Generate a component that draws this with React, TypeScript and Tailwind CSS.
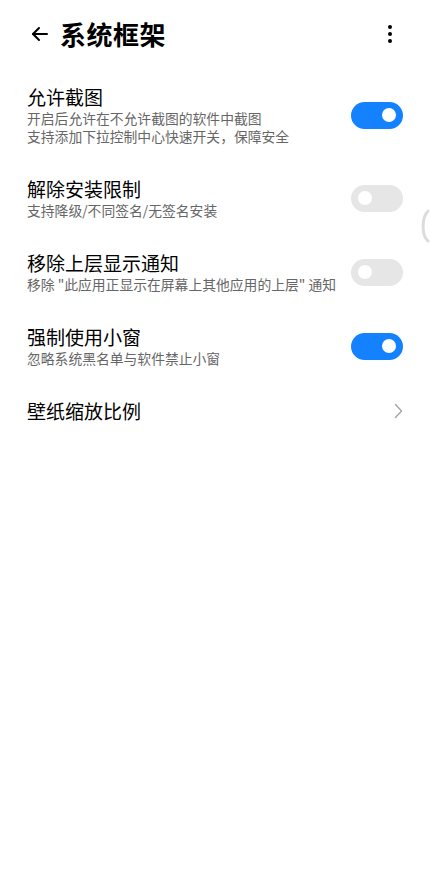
interface SettingRow {
  title: string;
  desc?: string;
  checked?: boolean;
  arrow?: boolean;
}

const rows: SettingRow[] = [
  {
    title: '允许截图',
    desc: '开启后允许在不允许截图的软件中截图\n支持添加下拉控制中心快速开关，保障安全',
    checked: true,
  },
  { title: '解除安装限制', desc: '支持降级/不同签名/无签名安装', checked: false },
  { title: '移除上层显示通知', desc: '移除 "此应用正显示在屏幕上其他应用的上层" 通知', checked: false },
  { title: '强制使用小窗', desc: '忽略系统黑名单与软件禁止小窗', checked: true },
  { title: '壁纸缩放比例', arrow: true },
];

function Toggle({ on }: { on: boolean }) {
  return (
    <div
      className={`flex h-[27px] w-[52px] shrink-0 items-center rounded-full px-[7px] ${
        on ? 'justify-end bg-[#1482ff]' : 'justify-start bg-[#e6e6e6]'
      }`}
    >
      <div className="h-[14px] w-[14px] rounded-full bg-white" />
    </div>
  );
}

export default function App() {
  return (
    <div
      className="relative min-h-[876px] w-full bg-white text-black"
      style={{ fontFamily: '"Noto Sans CJK SC", "Noto Sans", sans-serif' }}
    >
      {/* header */}
      <div className="flex h-[69px] items-center pl-[30px] pr-[38px] pb-[1px]">
        <svg width="20" height="20" viewBox="0 0 20 20" fill="none" stroke="#000" strokeWidth="2" strokeLinecap="round" strokeLinejoin="round">
          <path d="M17 10H3" />
          <path d="M9 4L3 10L9 16" />
        </svg>
        <h1 className="ml-[10px] text-[26px] leading-none font-bold tracking-[0.5px]">系统框架</h1>
        <div className="ml-auto flex flex-col items-center gap-[3px]">
          <span className="h-[4px] w-[4px] rounded-full bg-black" />
          <span className="h-[4px] w-[4px] rounded-full bg-black" />
          <span className="h-[4px] w-[4px] rounded-full bg-black" />
        </div>
      </div>

      {rows.map((row) => (
        <div key={row.title} className="flex items-center py-[16px] pl-[27px] pr-[27px]">
          <div className="flex-1">
            <div className="text-[19px] leading-[24px]">{row.title}</div>
            {row.desc && (
              <div className="whitespace-pre-line text-[13.8px] leading-[18px] text-[#666]">{row.desc}</div>
            )}
          </div>
          {row.arrow ? (
            <svg width="9" height="16" viewBox="0 0 9 16" fill="none" stroke="#a6a6a6" strokeWidth="1.4" strokeLinecap="round" strokeLinejoin="round">
              <path d="M1.5 1.5L7.5 8L1.5 14.5" />
            </svg>
          ) : (
            <Toggle on={!!row.checked} />
          )}
        </div>
      ))}

      {/* edge gesture hint */}
      <svg className="absolute left-[417px] top-[209px]" width="13" height="34" viewBox="0 0 13 34" fill="none">
        <path d="M11 2C5 8 4 26 11 32" stroke="#dcdcdc" strokeWidth="3" strokeLinecap="round" />
      </svg>
    </div>
  );
}
